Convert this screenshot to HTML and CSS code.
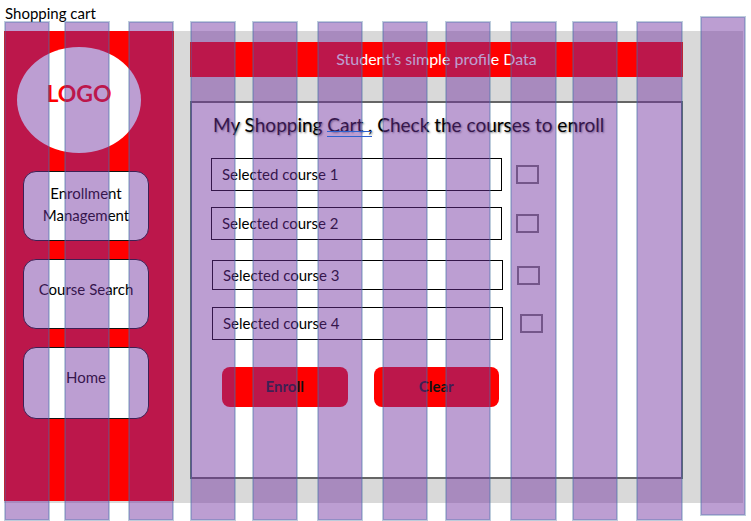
FILE: index.html
```html
<!DOCTYPE html>
<html lang="en">
<head>
<meta charset="utf-8">
<meta name="viewport" content="width=device-width, initial-scale=1">
<title>Shopping cart</title>
<link rel="stylesheet" href="styles.css">
</head>
<body>
<h1 class="page-title">Shopping cart</h1>
<div class="board">
  <div class="canvas">
    <aside class="sidebar">
      <div class="logo">LOGO</div>
      <nav class="menu">
        <a class="menu-link" href="#enrollment">Enrollment Management</a>
        <a class="menu-link" href="#search">Course Search</a>
        <a class="menu-link" href="#home">Home</a>
      </nav>
    </aside>
    <main class="content">
      <header class="profile">Student’s simple profile Data</header>
      <form class="cart">
        <h2 class="cart-title">My Shopping <span class="marked">Cart ,</span> Check the courses to enroll</h2>
        <div class="courses">
          <div class="course">
            <label class="course-name" for="course-1">Selected course 1</label>
            <input class="course-check" type="checkbox" id="course-1">
          </div>
          <div class="course">
            <label class="course-name" for="course-2">Selected course 2</label>
            <input class="course-check" type="checkbox" id="course-2">
          </div>
        </div>
        <div class="courses courses-more">
          <div class="course course-short">
            <label class="course-name" for="course-3">Selected course 3</label>
            <input class="course-check" type="checkbox" id="course-3">
          </div>
          <div class="course course-wide">
            <label class="course-name" for="course-4">Selected course 4</label>
            <input class="course-check" type="checkbox" id="course-4">
          </div>
        </div>
        <div class="actions">
          <button class="action" type="button">Enroll</button>
          <button class="action" type="button">Clear</button>
        </div>
      </form>
    </main>
  </div>
  <!-- Twelve-column layout guides over the wireframe -->
  <div class="guides" aria-hidden="true">
    <i></i><i></i><i></i><i></i><i></i><i></i><i></i><i></i><i></i><i></i><i></i><i></i>
  </div>
</div>
</body>
</html>
```

FILE: styles.css
```css
* {
  box-sizing: border-box;
}

body {
  margin: 0;
  background: #fff;
  color: #000;
  font-family: Lato, "Liberation Sans", sans-serif;
  font-size: 15px;
  line-height: 22px;
}

.page-title {
  margin: 0;
  padding: 2px 5px 1px;
  font-size: 15px;
  font-weight: 400;
  line-height: 22px;
}

.board {
  position: relative;
  padding: 6px 8px 18px 4px;
}

.canvas {
  display: grid;
  grid-template-columns: 170fr 16fr 493fr 60fr;
  background: #d9d9d9;
}

.sidebar {
  grid-column: 1;
  margin-bottom: 2px;
  padding: 16px 25px 0 19px;
  background: #f00;
}

.logo {
  display: flex;
  align-items: center;
  justify-content: center;
  height: 106px;
  margin: 0 8px 0 -6px;
  padding-bottom: 14px;
  border-radius: 50%;
  background: #fff;
  color: #f00;
  font-size: 23px;
  font-weight: 700;
}

.menu {
  display: flex;
  flex-direction: column;
  gap: 18px;
  margin-top: 18px;
}

.menu-link {
  min-height: 70px;
  padding: 10px 10px 0;
  border: 1px solid #111;
  border-radius: 13px;
  background: #fff;
  color: #000;
  text-align: center;
  text-decoration: none;
}

.menu-link + .menu-link {
  padding-top: 18px;
}

.menu-link:last-child {
  min-height: 72px;
}

.content {
  grid-column: 3;
  padding: 11px 0 24px;
}

.profile {
  height: 35px;
  background: #f00;
  color: #fff;
  font-size: 16px;
  line-height: 34px;
  text-align: center;
}

.cart {
  min-height: 378px;
  margin-top: 24px;
  padding: 9px 20px 0 19px;
  border: 2px solid #666;
  background: #fff;
}

.cart-title {
  margin: 0 0 21px;
  padding-left: 2px;
  font-size: 19px;
  font-weight: 400;
  line-height: 25px;
  text-shadow: 1px 1px 2px rgba(0, 0, 0, 0.5);
  white-space: nowrap;
}

.marked {
  position: relative;
}

/* Grammar mark, drawn above the guides */
.marked::after {
  content: "";
  position: absolute;
  z-index: 1;
  right: 0;
  bottom: -1px;
  left: 0;
  height: 4px;
  border: solid #2f62cf;
  border-width: 1px 0;
}

.courses {
  display: grid;
  gap: 16px;
}

.courses-more {
  gap: 17px;
  margin: 20px -1px 0 1px;
}

.course {
  display: grid;
  grid-template-columns: 2fr 1fr;
  align-items: center;
  gap: 14px;
  height: 33px;
}

.course-short {
  height: 30px;
}

.course-wide .course-check {
  margin-left: 3px;
}

.course-name {
  display: flex;
  align-items: center;
  height: 100%;
  padding: 0 0 2px 10px;
  border: 1px solid #000;
}

.course-short .course-name {
  padding-bottom: 0;
}

.course-check {
  appearance: none;
  width: 23px;
  height: 19px;
  margin: 0;
  border: 2px solid #777;
}

.course-check:checked {
  background: #777;
}

.actions {
  display: grid;
  grid-template-columns: 1fr 1fr;
  gap: 26px;
  margin: 27px 36% 0 11px;
}

.action {
  height: 40px;
  padding: 0 0 2px;
  border: 0;
  border-radius: 8px;
  background: #f00;
  color: #111;
  font: inherit;
  font-weight: 700;
}

.guides {
  position: absolute;
  inset: -3px 6px 1px 5px;
  display: grid;
  grid-template-columns: 44fr 16fr 44fr 20fr 44fr 18fr 44fr 18fr 44fr 21fr 44fr 21fr 44fr 19fr 44fr 21fr 45fr 17fr 44fr 20fr 45fr 19fr 44fr;
  pointer-events: none;
}

.guides i {
  grid-row: 1;
  background: rgba(112, 48, 160, 0.47);
  box-shadow: 0 0 0 1px rgba(65, 113, 156, 0.35), inset 0 0 0 1px rgba(65, 113, 176, 0.35);
}

.guides i:nth-child(1) { grid-column: 1; }
.guides i:nth-child(2) { grid-column: 3; }
.guides i:nth-child(3) { grid-column: 5; }
.guides i:nth-child(4) { grid-column: 7; }
.guides i:nth-child(5) { grid-column: 9; }
.guides i:nth-child(6) { grid-column: 11; }
.guides i:nth-child(7) { grid-column: 13; }
.guides i:nth-child(8) { grid-column: 15; }
.guides i:nth-child(9) { grid-column: 17; }
.guides i:nth-child(10) { grid-column: 19; }
.guides i:nth-child(11) { grid-column: 21; }

.guides i:nth-child(12) {
  grid-column: 23;
  margin: -5px 0 5px;
}
```
